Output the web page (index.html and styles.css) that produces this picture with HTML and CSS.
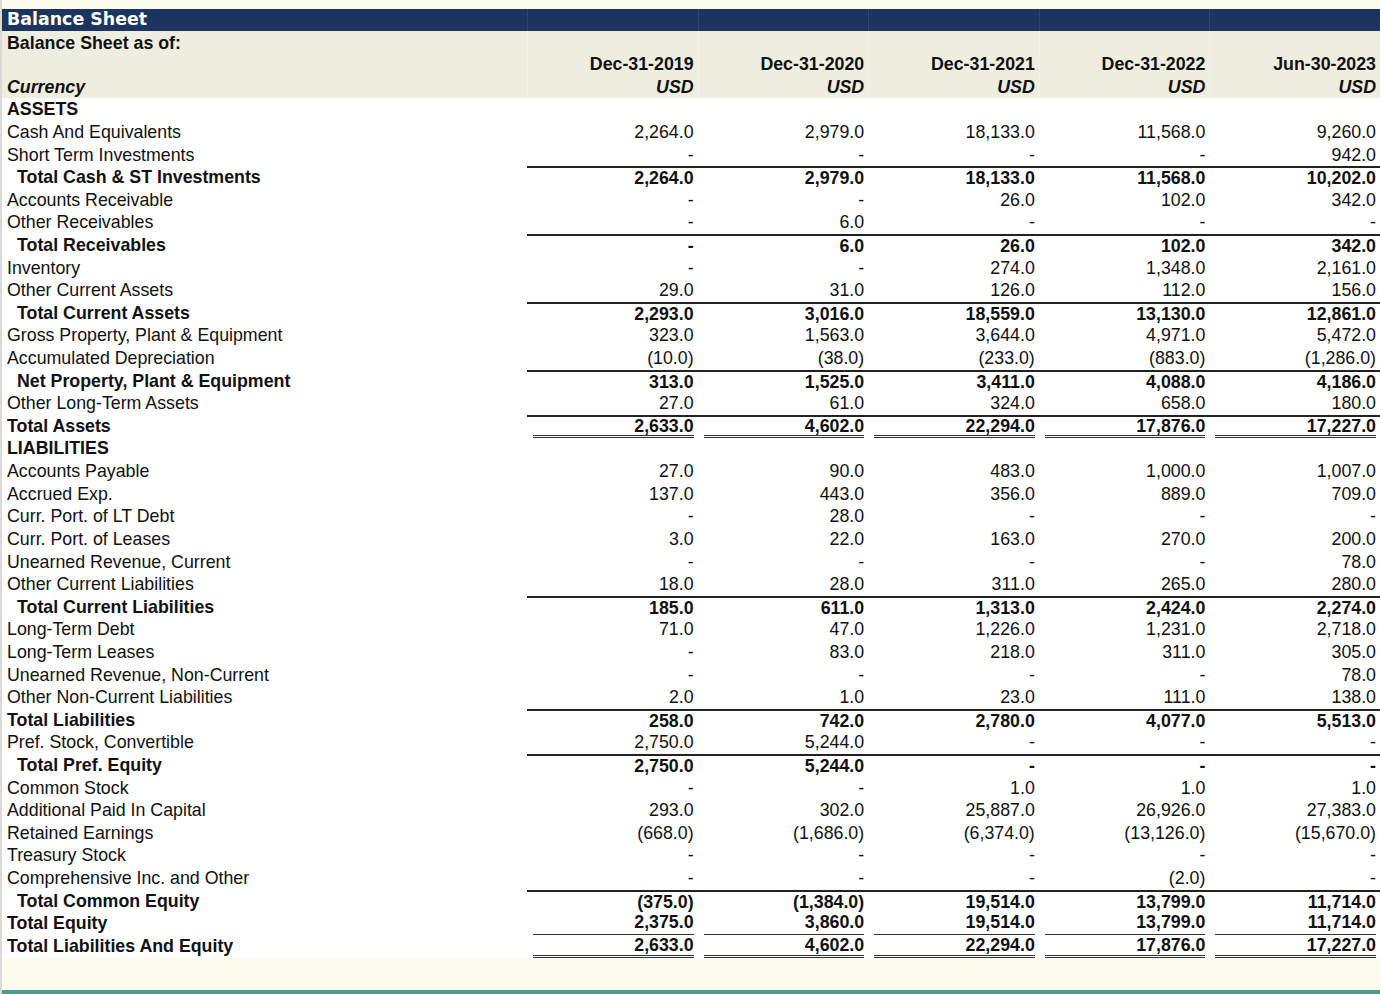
FILE: index.html
```html
<!DOCTYPE html>
<html lang="en">
<head>
<meta charset="utf-8">
<title>Balance Sheet</title>
<link rel="stylesheet" href="styles.css">
</head>
<body>
<div class="page">
  <div class="sheet">
    <div class="title-bar">
      <div class="title">Balance Sheet</div>
      <div></div><div></div><div></div><div></div><div></div>
    </div>
    <div class="head">
      <div class="head-row first">
        <div class="lbl strong">Balance Sheet as of:</div>
        <div class="hc"></div><div class="hc"></div><div class="hc"></div><div class="hc"></div><div class="hc"></div>
      </div>
      <div class="head-row tall">
        <div class="lbl strong em bottom">Currency</div>
        <div class="hc date">Dec-31-2019<br><i>USD</i></div>
        <div class="hc date">Dec-31-2020<br><i>USD</i></div>
        <div class="hc date">Dec-31-2021<br><i>USD</i></div>
        <div class="hc date">Dec-31-2022<br><i>USD</i></div>
        <div class="hc date">Jun-30-2023<br><i>USD</i></div>
      </div>
    </div>
    <div class="body">
      <div class="row section"><div class="lbl">ASSETS</div><div class="v"></div><div class="v"></div><div class="v"></div><div class="v"></div><div class="v"></div></div>
      <div class="row"><div class="lbl">Cash And Equivalents</div><div class="v">2,264.0</div><div class="v">2,979.0</div><div class="v">18,133.0</div><div class="v">11,568.0</div><div class="v">9,260.0</div></div>
      <div class="row"><div class="lbl">Short Term Investments</div><div class="v">-</div><div class="v">-</div><div class="v">-</div><div class="v">-</div><div class="v">942.0</div></div>
      <div class="row total indent"><div class="lbl">Total Cash &amp; ST Investments</div><div class="v">2,264.0</div><div class="v">2,979.0</div><div class="v">18,133.0</div><div class="v">11,568.0</div><div class="v">10,202.0</div></div>
      <div class="row"><div class="lbl">Accounts Receivable</div><div class="v">-</div><div class="v">-</div><div class="v">26.0</div><div class="v">102.0</div><div class="v">342.0</div></div>
      <div class="row"><div class="lbl">Other Receivables</div><div class="v">-</div><div class="v">6.0</div><div class="v">-</div><div class="v">-</div><div class="v">-</div></div>
      <div class="row total indent"><div class="lbl">Total Receivables</div><div class="v">-</div><div class="v">6.0</div><div class="v">26.0</div><div class="v">102.0</div><div class="v">342.0</div></div>
      <div class="row"><div class="lbl">Inventory</div><div class="v">-</div><div class="v">-</div><div class="v">274.0</div><div class="v">1,348.0</div><div class="v">2,161.0</div></div>
      <div class="row"><div class="lbl">Other Current Assets</div><div class="v">29.0</div><div class="v">31.0</div><div class="v">126.0</div><div class="v">112.0</div><div class="v">156.0</div></div>
      <div class="row total indent"><div class="lbl">Total Current Assets</div><div class="v">2,293.0</div><div class="v">3,016.0</div><div class="v">18,559.0</div><div class="v">13,130.0</div><div class="v">12,861.0</div></div>
      <div class="row"><div class="lbl">Gross Property, Plant &amp; Equipment</div><div class="v">323.0</div><div class="v">1,563.0</div><div class="v">3,644.0</div><div class="v">4,971.0</div><div class="v">5,472.0</div></div>
      <div class="row"><div class="lbl">Accumulated Depreciation</div><div class="v">(10.0)</div><div class="v">(38.0)</div><div class="v">(233.0)</div><div class="v">(883.0)</div><div class="v">(1,286.0)</div></div>
      <div class="row total indent"><div class="lbl">Net Property, Plant &amp; Equipment</div><div class="v">313.0</div><div class="v">1,525.0</div><div class="v">3,411.0</div><div class="v">4,088.0</div><div class="v">4,186.0</div></div>
      <div class="row"><div class="lbl">Other Long-Term Assets</div><div class="v">27.0</div><div class="v">61.0</div><div class="v">324.0</div><div class="v">658.0</div><div class="v">180.0</div></div>
      <div class="row total dbl"><div class="lbl">Total Assets</div><div class="v"><span>2,633.0</span></div><div class="v"><span>4,602.0</span></div><div class="v"><span>22,294.0</span></div><div class="v"><span>17,876.0</span></div><div class="v"><span>17,227.0</span></div></div>
      <div class="row section"><div class="lbl">LIABILITIES</div><div class="v"></div><div class="v"></div><div class="v"></div><div class="v"></div><div class="v"></div></div>
      <div class="row"><div class="lbl">Accounts Payable</div><div class="v">27.0</div><div class="v">90.0</div><div class="v">483.0</div><div class="v">1,000.0</div><div class="v">1,007.0</div></div>
      <div class="row"><div class="lbl">Accrued Exp.</div><div class="v">137.0</div><div class="v">443.0</div><div class="v">356.0</div><div class="v">889.0</div><div class="v">709.0</div></div>
      <div class="row"><div class="lbl">Curr. Port. of LT Debt</div><div class="v">-</div><div class="v">28.0</div><div class="v">-</div><div class="v">-</div><div class="v">-</div></div>
      <div class="row"><div class="lbl">Curr. Port. of Leases</div><div class="v">3.0</div><div class="v">22.0</div><div class="v">163.0</div><div class="v">270.0</div><div class="v">200.0</div></div>
      <div class="row"><div class="lbl">Unearned Revenue, Current</div><div class="v">-</div><div class="v">-</div><div class="v">-</div><div class="v">-</div><div class="v">78.0</div></div>
      <div class="row"><div class="lbl">Other Current Liabilities</div><div class="v">18.0</div><div class="v">28.0</div><div class="v">311.0</div><div class="v">265.0</div><div class="v">280.0</div></div>
      <div class="row total indent"><div class="lbl">Total Current Liabilities</div><div class="v">185.0</div><div class="v">611.0</div><div class="v">1,313.0</div><div class="v">2,424.0</div><div class="v">2,274.0</div></div>
      <div class="row"><div class="lbl">Long-Term Debt</div><div class="v">71.0</div><div class="v">47.0</div><div class="v">1,226.0</div><div class="v">1,231.0</div><div class="v">2,718.0</div></div>
      <div class="row"><div class="lbl">Long-Term Leases</div><div class="v">-</div><div class="v">83.0</div><div class="v">218.0</div><div class="v">311.0</div><div class="v">305.0</div></div>
      <div class="row"><div class="lbl">Unearned Revenue, Non-Current</div><div class="v">-</div><div class="v">-</div><div class="v">-</div><div class="v">-</div><div class="v">78.0</div></div>
      <div class="row"><div class="lbl">Other Non-Current Liabilities</div><div class="v">2.0</div><div class="v">1.0</div><div class="v">23.0</div><div class="v">111.0</div><div class="v">138.0</div></div>
      <div class="row total"><div class="lbl">Total Liabilities</div><div class="v">258.0</div><div class="v">742.0</div><div class="v">2,780.0</div><div class="v">4,077.0</div><div class="v">5,513.0</div></div>
      <div class="row"><div class="lbl">Pref. Stock, Convertible</div><div class="v">2,750.0</div><div class="v">5,244.0</div><div class="v">-</div><div class="v">-</div><div class="v">-</div></div>
      <div class="row total indent"><div class="lbl">Total Pref. Equity</div><div class="v">2,750.0</div><div class="v">5,244.0</div><div class="v">-</div><div class="v">-</div><div class="v">-</div></div>
      <div class="row"><div class="lbl">Common Stock</div><div class="v">-</div><div class="v">-</div><div class="v">1.0</div><div class="v">1.0</div><div class="v">1.0</div></div>
      <div class="row"><div class="lbl">Additional Paid In Capital</div><div class="v">293.0</div><div class="v">302.0</div><div class="v">25,887.0</div><div class="v">26,926.0</div><div class="v">27,383.0</div></div>
      <div class="row"><div class="lbl">Retained Earnings</div><div class="v">(668.0)</div><div class="v">(1,686.0)</div><div class="v">(6,374.0)</div><div class="v">(13,126.0)</div><div class="v">(15,670.0)</div></div>
      <div class="row"><div class="lbl">Treasury Stock</div><div class="v">-</div><div class="v">-</div><div class="v">-</div><div class="v">-</div><div class="v">-</div></div>
      <div class="row"><div class="lbl">Comprehensive Inc. and Other</div><div class="v">-</div><div class="v">-</div><div class="v">-</div><div class="v">(2.0)</div><div class="v">-</div></div>
      <div class="row total indent"><div class="lbl">Total Common Equity</div><div class="v">(375.0)</div><div class="v">(1,384.0)</div><div class="v">19,514.0</div><div class="v">13,799.0</div><div class="v">11,714.0</div></div>
      <div class="row strongrow sgl"><div class="lbl">Total Equity</div><div class="v"><span>2,375.0</span></div><div class="v"><span>3,860.0</span></div><div class="v"><span>19,514.0</span></div><div class="v"><span>13,799.0</span></div><div class="v"><span>11,714.0</span></div></div>
      <div class="row strongrow dbl"><div class="lbl">Total Liabilities And Equity</div><div class="v"><span>2,633.0</span></div><div class="v"><span>4,602.0</span></div><div class="v"><span>22,294.0</span></div><div class="v"><span>17,876.0</span></div><div class="v"><span>17,227.0</span></div></div>
    </div>
  </div>
  <div class="footer-bar"></div>
</div>
</body>
</html>
```

FILE: styles.css
```css
* {
  box-sizing: border-box;
}

html, body {
  margin: 0;
  padding: 0;
}

body {
  background: #fdfaee;
  font-family: "Liberation Sans", Arial, sans-serif;
  font-size: 17.8px;
  color: #111;
  overflow: hidden;
}

.page {
  border-left: 2px solid #d9d9d6;
  padding-top: 9px;
  min-height: 994px;
  display: flex;
  flex-direction: column;
}

.title-bar,
.head-row,
.row {
  display: grid;
  grid-template-columns: 525px repeat(5, 1fr);
}

.title-bar {
  height: 21.5px;
  background: #1b355e;
}

.title-bar > div + div {
  border-left: 1px solid #2c4670;
}

.title {
  color: #fff;
  font-family: "DejaVu Sans", Verdana, sans-serif;
  font-weight: bold;
  font-size: 17.4px;
  line-height: 21px;
  padding-left: 5px;
}

.head {
  background: #eeeee0;
}

.head-row {
  height: 22.62px;
  line-height: 22.62px;
}

.head-row.first .lbl {
  padding-top: 1.5px;
}

.head-row.tall {
  height: 45.24px;
}

.hc {
  border-left: 1px solid #f3f3ea;
}

.head .lbl {
  padding-left: 5px;
}

.strong {
  font-weight: bold;
}

.em {
  font-style: italic;
}

.bottom {
  align-self: end;
}

.date {
  text-align: right;
  font-weight: bold;
  padding-right: 4px;
}

.body {
  background: #fff;
}

.row {
  height: 22.62px;
  line-height: 22.62px;
}

.row .lbl {
  padding-left: 5px;
  white-space: nowrap;
}

.row .v {
  text-align: right;
  padding: 0 4px 0 6px;
  white-space: nowrap;
}

.section .lbl {
  font-weight: bold;
}

.total,
.strongrow {
  font-weight: bold;
}

.total.indent .lbl {
  padding-left: 15px;
}

.total .v {
  border-top: 2px solid #222;
  line-height: 20.62px;
}

.dbl .v span,
.sgl .v span {
  display: block;
  height: 100%;
}

.dbl .v span {
  border-bottom: 3px double #333;
  line-height: 20.4px;
}

.total.dbl .v span {
  line-height: 18.6px;
}

.sgl .v span {
  border-bottom: 1.5px solid #333;
  line-height: 21.6px;
}

.footer-bar {
  margin-top: 32.4px;
  height: 8px;
  background: #4a9d8e;
}
```
